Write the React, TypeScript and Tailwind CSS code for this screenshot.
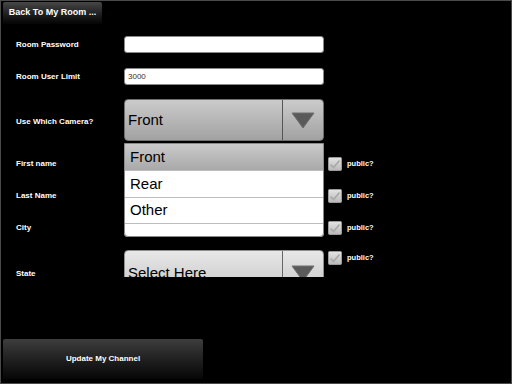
import React from 'react';

const Label: React.FC<{ text: string; className?: string }> = ({ text, className = '' }) => (
  <div className={`w-[123px] shrink-0 pl-[15px] text-[8px] font-bold leading-none text-white ${className}`}>{text}</div>
);

const Check: React.FC = () => (
  <div className="ml-[4px] flex shrink-0 items-center">
    <svg width="14" height="14" viewBox="0 0 14 14">
      <defs>
        <linearGradient id="cb" x1="0" y1="0" x2="0" y2="1">
          <stop offset="0" stopColor="#e4e4e4" />
          <stop offset="1" stopColor="#b9b9b9" />
        </linearGradient>
      </defs>
      <rect x="0.5" y="0.5" width="13" height="13" rx="1" fill="url(#cb)" stroke="#9a9a9a" />
      <polyline points="2.5,7.5 5.5,10.5 11.5,3.5" fill="none" stroke="#a8a8a8" strokeWidth="1.6" />
    </svg>
    <span className="ml-[5px] text-[7.5px] font-bold text-white">public?</span>
  </div>
);

const Arrow: React.FC = () => (
  <svg width="24" height="17" viewBox="0 0 24 17">
    <polygon points="1,1 23,1 12,16" fill="#5a5a5a" stroke="#6e6e6e" strokeWidth="1" />
  </svg>
);

const TextInput: React.FC<{ value?: string }> = ({ value = '' }) => (
  <div className="flex h-[17px] w-[200px] shrink-0 items-center rounded-[3px] border border-[#8a8a8a] bg-white pl-[3px] text-[8px] text-[#333]">
    {value}
  </div>
);

export default function App() {
  return (
    <div
      className="flex h-[384px] w-[512px] flex-col overflow-hidden border border-[#4a4a4a] bg-black"
      style={{ fontFamily: '"Liberation Sans", Arial, sans-serif' }}
    >
      {/* header */}
      <div className="h-[23px] shrink-0 pl-[2px] pt-[1px]">
        <div className="flex h-[22px] w-[99px] items-center justify-center rounded-t-[2px] bg-gradient-to-b from-[#474747] to-[#050505] text-[9px] font-bold text-white">
          Back To My Room ...
        </div>
      </div>

      {/* form, clipped like a scroll view */}
      <div className="flex h-[253px] shrink-0 flex-col overflow-hidden">
        <div className="mt-[12px] flex h-[17px] shrink-0 items-center">
          <Label text="Room Password" />
          <TextInput />
        </div>
        <div className="mt-[15px] flex h-[17px] shrink-0 items-center">
          <Label text="Room User Limit" />
          <TextInput value="3000" />
        </div>
        <div className="relative z-10 mt-[14px] flex h-[42px] shrink-0 items-center">
          <Label text="Use Which Camera?" className="pt-[4px]" />
          <div className="relative">
            <div className="flex h-[42px] w-[200px] rounded-[4px] border border-[#6f6f6f] bg-gradient-to-b from-[#cbcbcb] to-[#a2a2a2]">
              <div className="flex flex-1 items-center pl-[3px] text-[15px] text-black">Front</div>
              <div className="flex w-[41px] items-center justify-center border-l border-[#555]">
                <Arrow />
              </div>
            </div>
            {/* open list */}
            <div className="absolute left-0 top-[44px] w-[200px] overflow-hidden rounded-b-[4px] border border-[#8a8a8a] bg-white text-[15px] text-black">
              <div className="flex h-[27px] items-center border-b border-[#bdbdbd] bg-gradient-to-b from-[#cacaca] to-[#a9a9a9] pl-[5px]">Front</div>
              <div className="flex h-[27px] items-center border-b border-[#bdbdbd] pl-[5px]">Rear</div>
              <div className="flex h-[26px] items-center border-b border-[#bdbdbd] pl-[5px]">Other</div>
              <div className="h-[12px]" />
            </div>
          </div>
        </div>
        <div className="mt-[7px] flex h-[32px] shrink-0 items-center">
          <Label text="First name" />
          <TextInput />
          <Check />
        </div>
        <div className="flex h-[32px] shrink-0 items-center">
          <Label text="Last Name" />
          <TextInput />
          <Check />
        </div>
        <div className="flex h-[32px] shrink-0 items-center">
          <Label text="City" />
          <TextInput />
          <Check />
        </div>
        <div className="mt-[6px] flex h-[46px] shrink-0 items-center">
          <Label text="State" className="pt-[2px]" />
          <div className="flex h-[46px] w-[200px] shrink-0 rounded-[4px] border border-[#8f8f8f] bg-gradient-to-b from-[#e8e8e8] to-[#c4c4c4]">
            <div className="flex flex-1 items-center pl-[3px] pt-[1px] text-[15px] text-black">Select Here</div>
            <div className="flex w-[41px] items-center justify-center border-l border-[#666]">
              <Arrow />
            </div>
          </div>
          <div className="self-start pt-[1px]">
            <Check />
          </div>
        </div>
      </div>

      {/* footer */}
      <div className="flex flex-1 flex-col justify-end pb-[4px] pl-[2px]">
        <div className="flex h-[40px] w-[200px] items-center justify-center rounded-t-[2px] bg-gradient-to-b from-[#3e3e3e] to-[#070707] text-[8px] font-bold text-white">
          Update My Channel
        </div>
      </div>
    </div>
  );
}
